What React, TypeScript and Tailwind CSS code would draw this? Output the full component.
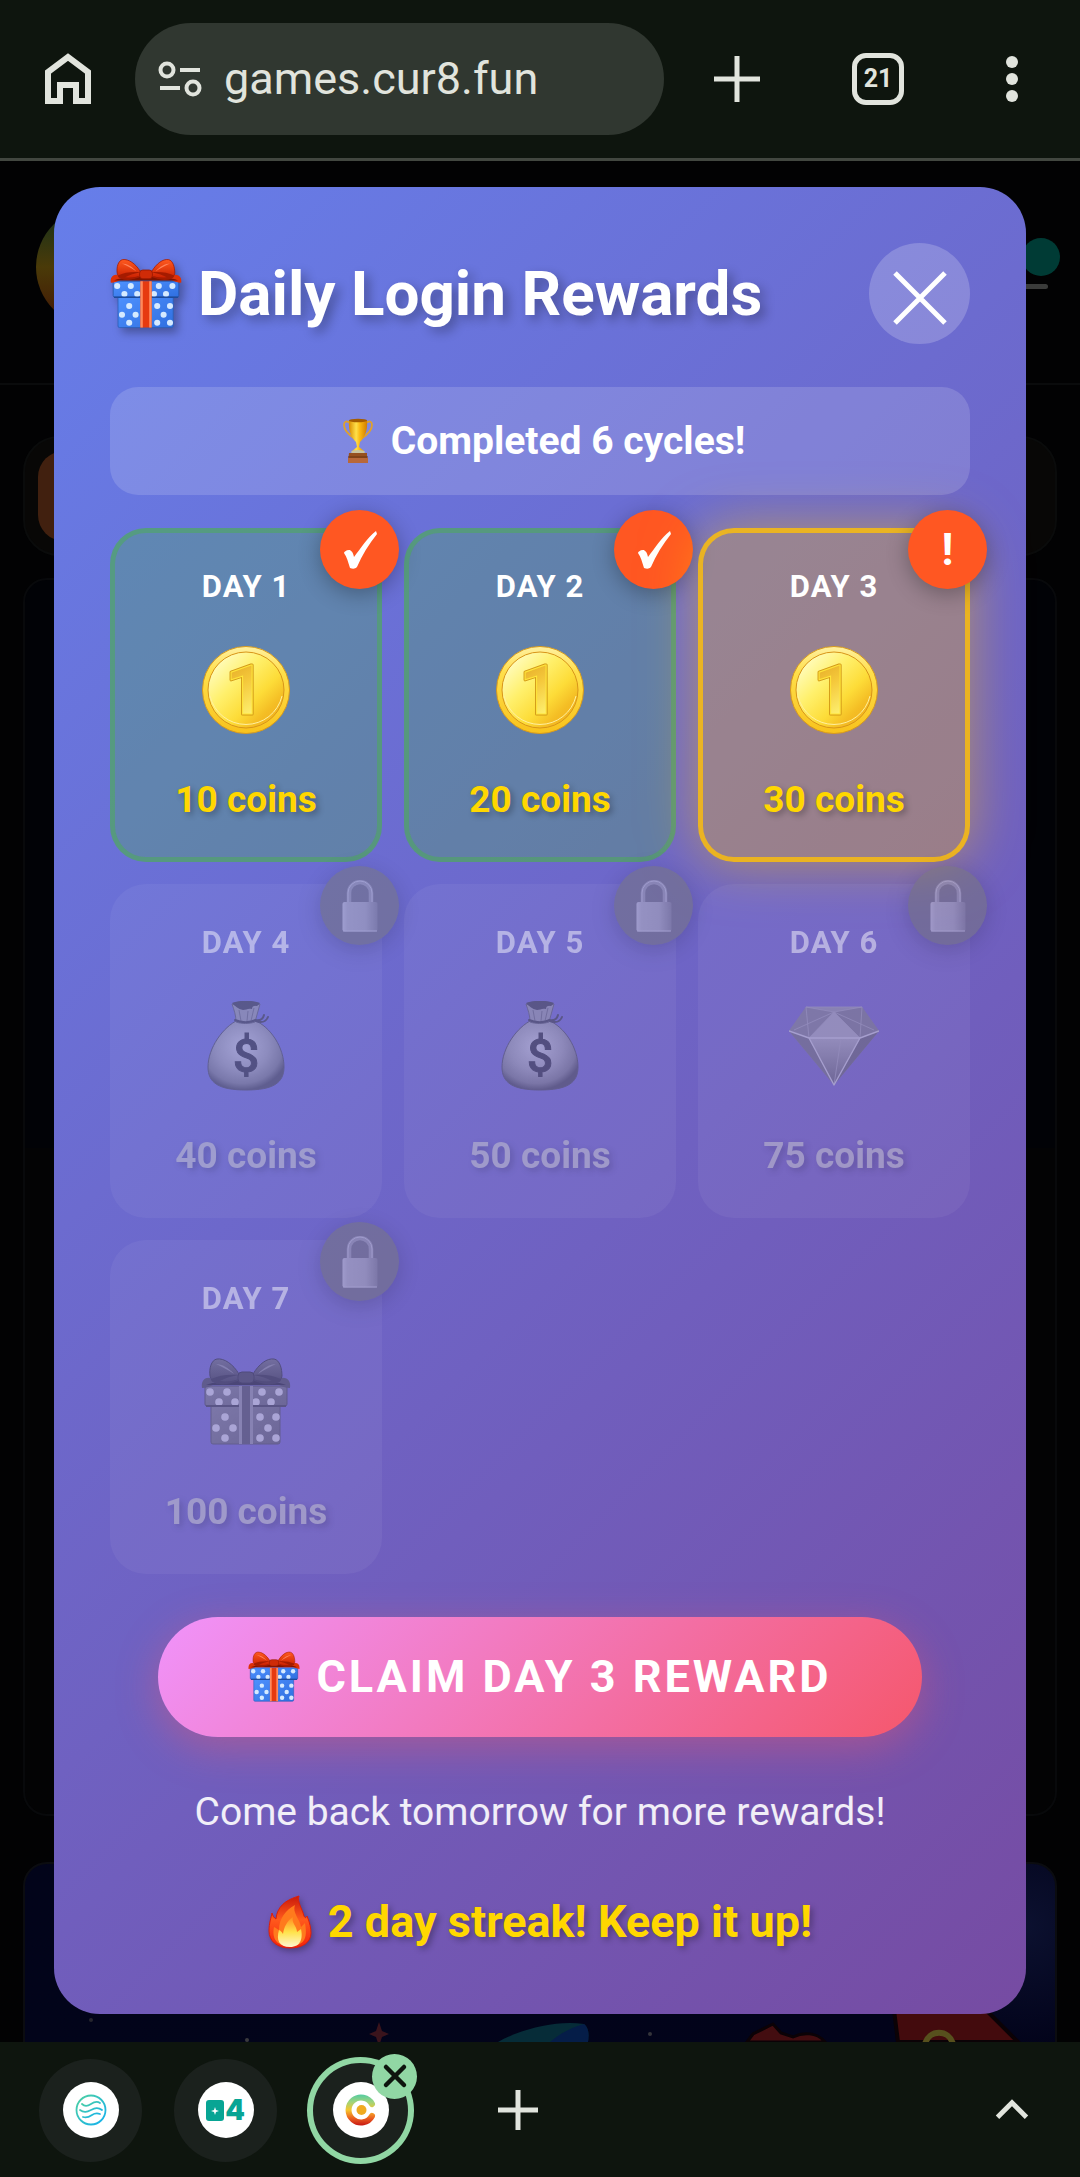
import { useId, type ReactNode } from 'react'
import { ChevronUp, Plus, X } from 'lucide-react'

type DayStatus = 'claimed' | 'today' | 'locked'
type RewardIcon = 'coin' | 'bag' | 'gem' | 'gift'

interface DayReward {
  day: number
  coins: number
  icon: RewardIcon
  status: DayStatus
}

const REWARDS: DayReward[] = [
  { day: 1, coins: 10, icon: 'coin', status: 'claimed' },
  { day: 2, coins: 20, icon: 'coin', status: 'claimed' },
  { day: 3, coins: 30, icon: 'coin', status: 'today' },
  { day: 4, coins: 40, icon: 'bag', status: 'locked' },
  { day: 5, coins: 50, icon: 'bag', status: 'locked' },
  { day: 6, coins: 75, icon: 'gem', status: 'locked' },
  { day: 7, coins: 100, icon: 'gift', status: 'locked' },
]

const CARD_STYLE: Record<DayStatus, string> = {
  claimed: 'border-[rgba(76,175,80,0.5)] bg-[rgba(76,175,80,0.3)]',
  today: 'border-[rgba(255,193,7,0.8)] bg-[rgba(255,193,7,0.3)] shadow-[0_0_55px_rgba(255,193,7,0.5)]',
  locked: 'border-transparent bg-white/10 opacity-50 grayscale',
}

interface IconProps {
  className?: string
}

const LID_DOTS = [[8, 34], [25, 34], [17, 44], [33, 44], [60, 34], [77, 34], [69, 44], [54, 44]]
const BODY_DOTS = [[24, 59], [15, 70], [32, 70], [24, 80], [59, 59], [75, 59], [67, 70], [59, 80], [75, 80]]

function GiftIcon({ className }: IconProps) {
  const id = useId()
  return (
    <svg viewBox="0 0 90 90" className={className} aria-hidden="true">
      <defs>
        <linearGradient id={`${id}b`} x1="0" y1="0" x2="1" y2="1">
          <stop offset="0" stopColor="#4f92ff" />
          <stop offset="1" stopColor="#2f6fe0" />
        </linearGradient>
        <linearGradient id={`${id}r`} x1="0" y1="0" x2="0" y2="1">
          <stop offset="0" stopColor="#ff5a1f" />
          <stop offset="1" stopColor="#c81e00" />
        </linearGradient>
      </defs>
      <rect x="10" y="46" width="69" height="41" rx="2" fill={`url(#${id}b)`} stroke="#2a5db5" strokeWidth="1" />
      {BODY_DOTS.map(([x, y]) => (
        <circle key={`${x}-${y}`} cx={x} cy={y + 1} r="3.8" fill="#d5eaff" />
      ))}
      <rect x="4" y="29" width="82" height="20" rx="2" fill={`url(#${id}b)`} stroke="#2355a8" strokeWidth="1" />
      {LID_DOTS.map(([x, y]) => (
        <circle key={`${x}-${y}`} cx={x + 1} cy={y + 1} r="3.8" fill="#d5eaff" />
      ))}
      <path d="M5 49h80" stroke="#1d4b9c" strokeWidth="2" />
      <path d="M38 29h14v58H38z" fill="#e63a10" />
      <path d="M38 29h3v58h-3zM49 29h3v58h-3z" fill="#ff8a5c" />
      <path d="M9 21C3 20 0 25 1 31c5 0 9-2 13-4zM80 21c7-1 10 4 9 10-5 0-9-2-13-4z" fill="#dd3108" />
      <path d="M5 28h80c-12-6-68-6-80 0z" fill="#7e1400" />
      <path d="M38 17C32 7 23 1 16 2c-6 1-8 10-7 17 1 6 7 8 13 7 6 0 12-1 16-3zM52 17C58 7 66 1 73 2c6 1 8 10 8 17-1 6-7 8-13 7-6 0-12-1-16-3z" fill={`url(#${id}r)`} stroke="#a51b00" strokeWidth="1" />
      <path d="M10 22c8-4 18-5 28-4-7 1-14 3-19 6 7 1 13 0 19-2-7 5-16 7-24 4-3-1-4-2-4-4zM80 22c-8-4-18-5-28-4 7 1 14 3 19 6-7 1-13 0-19-2 7 5 16 7 24 4 3-1 4-2 4-4z" fill="#a51b00" />
      <path d="M15 7c6 0 13 4 18 10-5-4-12-7-18-10zM75 7c-6 0-13 4-18 10 5-4 12-7 18-10z" fill="#ff8258" />
      <rect x="37" y="15" width="16" height="11" rx="4" fill="#cf2b07" stroke="#961800" strokeWidth="1" />
    </svg>
  )
}

function CoinIcon({ className }: IconProps) {
  const id = useId()
  return (
    <svg viewBox="0 0 90 90" className={className} aria-hidden="true">
      <defs>
        <linearGradient id={`${id}o`} x1="0" y1="0" x2="0" y2="1">
          <stop offset="0" stopColor="#fff0a0" />
          <stop offset="0.3" stopColor="#ffdf4a" />
          <stop offset="1" stopColor="#f8c21c" />
        </linearGradient>
        <linearGradient id={`${id}i`} x1="0.1" y1="0.1" x2="0.9" y2="0.9">
          <stop offset="0" stopColor="#fffdc4" />
          <stop offset="0.35" stopColor="#fff06c" />
          <stop offset="0.65" stopColor="#fddc38" />
          <stop offset="0.85" stopColor="#f4bd24" />
          <stop offset="1" stopColor="#f2b31f" />
        </linearGradient>
        <linearGradient id={`${id}n`} x1="0" y1="0" x2="0.3" y2="1">
          <stop offset="0" stopColor="#dd9c1b" />
          <stop offset="0.5" stopColor="#f5c93c" />
          <stop offset="1" stopColor="#fff97c" />
        </linearGradient>
      </defs>
      <circle cx="45" cy="45" r="43.5" fill={`url(#${id}o)`} stroke="#d89a1c" strokeWidth="1" />
      <circle cx="45" cy="45" r="38" fill={`url(#${id}i)`} stroke="#d8951a" strokeWidth="1" />
      <path d="M9 51a37 37 0 0 0 72 0" fill="none" stroke="#fff0a0" strokeWidth="1" />
      <text x="44" y="69" textAnchor="middle" className="[font-family:Roboto,sans-serif] text-[68px] font-bold" fill={`url(#${id}n)`} stroke="#d39a18" strokeWidth="3" strokeLinejoin="round" paintOrder="stroke">
        1
      </text>
      <text x="44" y="69" textAnchor="middle" className="[font-family:Roboto,sans-serif] text-[68px] font-bold" fill="none" stroke="#ffe53b" strokeWidth="1">
        1
      </text>
    </svg>
  )
}

function BagIcon({ className }: IconProps) {
  const id = useId()
  return (
    <svg viewBox="0 0 90 90" className={className} aria-hidden="true">
      <defs>
        <radialGradient id={id} cx="0.45" cy="0.38" r="0.62">
          <stop offset="0" stopColor="#e0dcc8" />
          <stop offset="0.55" stopColor="#b5aea0" />
          <stop offset="0.85" stopColor="#8d867c" />
          <stop offset="1" stopColor="#58524c" />
        </radialGradient>
      </defs>
      <path d="M37 19C22 26 7 47 7 66c0 16 11 23 38 23s38-7 38-23c0-19-13-40-30-47z" fill={`url(#${id})`} stroke="#5b554e" strokeWidth="1" />
      <path d="M31 3c2 6 4 11 4 18 6 2 13 2 19 0l5-18c-8 3-20 3-28 0z" fill="#aaa398" stroke="#6c655c" strokeWidth="1" />
      <path d="M31 2c8-3 20-3 28 0l-3 3c-3-1-5 0-5 3-4-1-6 1-9 1-5-1-8-4-11-7z" fill="#4b4541" />
      <path d="M38 9l2 11M47 10l-1 10M53 7l-3 13" stroke="#7b746b" strokeWidth="1" />
      <path d="M34 19c6 3 15 3 21 0M54 19c5 1 8-1 9-5M55 20c5 2 10 1 12-4" fill="none" stroke="#4b4541" strokeWidth="2" strokeLinecap="round" />
      <text x="45" y="71" textAnchor="middle" fill="#3c3935" stroke="#3c3935" strokeWidth="1" className="[font-family:Roboto,sans-serif] text-[46px] font-medium">
        $
      </text>
    </svg>
  )
}

function GemIcon({ className }: IconProps) {
  const id = useId()
  return (
    <svg viewBox="0 0 90 90" className={className} aria-hidden="true">
      <defs>
        <linearGradient id={id} x1="0" y1="0" x2="0" y2="1">
          <stop offset="0" stopColor="#b8b8b8" />
          <stop offset="1" stopColor="#6c6c6c" />
        </linearGradient>
      </defs>
      <path d="M17 6h56l17 24-45 54L0 30z" fill="#8e8e8e" />
      <path d="M0 30l20 7 25 47z" fill="#7c7c7c" />
      <path d="M90 30l-19 7-26 47z" fill="#707070" />
      <path d="M20 37h51L45 84z" fill={`url(#${id})`} />
      <path d="M17 6L0 30l20 7 25-26z" fill="#8f8f8f" />
      <path d="M73 6l17 24-19 7-26-26z" fill="#888" />
      <path d="M45 11L20 37h51z" fill="#b9b9b9" />
      <path d="M17 6h56L45 11z" fill="#a4a4a4" />
      <path d="M17 6h56M17 6l3 31M73 6l-2 31M45 11L20 37M45 11l26 26M17 6l28 5 28-5M5 29l40-18 40 18M37 22h17M52 37l-7 47" fill="none" stroke="#b8b8b8" strokeWidth="0.8" />
      <path d="M0 30l20 7h51l19-7M20 37l25 47 26-47" fill="none" stroke="#dcdcdc" strokeWidth="1.4" strokeLinejoin="round" />
    </svg>
  )
}

function LockIcon({ className }: IconProps) {
  const id = useId()
  return (
    <svg viewBox="0 0 36 52" className={className} aria-hidden="true">
      <defs>
        <linearGradient id={id} x1="0" y1="0" x2="1" y2="0">
          <stop offset="0" stopColor="#d0d0d0" />
          <stop offset="0.15" stopColor="#bcbcbc" />
          <stop offset="0.65" stopColor="#b4b4b4" />
          <stop offset="1" stopColor="#8b8b8b" />
        </linearGradient>
      </defs>
      <path d="M7 23V13a11 11 0 0 1 22 0v10" fill="none" stroke="#a5a5a5" strokeWidth="4.5" />
      <path d="M6 23V13a12 12 0 0 1 24 0v10" fill="none" stroke="#d0d0d0" strokeWidth="1" />
      <rect x="0.5" y="22" width="35" height="29.5" rx="2" fill={`url(#${id})`} />
      <path d="M1 51h34" stroke="#d2d2d2" strokeWidth="1" />
    </svg>
  )
}

function TrophyIcon({ className }: IconProps) {
  const id = useId()
  return (
    <svg viewBox="0 0 46 46" className={className} aria-hidden="true">
      <defs>
        <linearGradient id={id} x1="0" y1="0" x2="1" y2="0">
          <stop offset="0" stopColor="#d98b00" />
          <stop offset="0.4" stopColor="#ffe04a" />
          <stop offset="0.6" stopColor="#fbb912" />
          <stop offset="1" stopColor="#d07d00" />
        </linearGradient>
      </defs>
      <path d="M15 5c-4-3-6-1-6 2 0 6 5 10 11 14M31 5c4-3 6-1 6 2 0 6-5 10-11 14" fill="none" stroke="#e0a12b" strokeWidth="1.8" />
      <path d="M14 2h18c1 12-3 18-7 22l-1 5 5 4v3H17v-3l5-4-1-5C17 20 13 14 14 2z" fill={`url(#${id})`} />
      <ellipse cx="23" cy="2.5" rx="9" ry="1.8" fill="#a55c00" />
      <ellipse cx="23" cy="34" rx="7" ry="2" fill="#c9c4a0" />
      <path d="M14 35h18v10H13z" fill="#96501f" />
      <path d="M13 40h20v5H13z" fill="#b8683a" />
      <path d="M13 39h20" stroke="#6b3412" strokeWidth="1" />
    </svg>
  )
}

function FireIcon({ className }: IconProps) {
  const id = useId()
  return (
    <svg viewBox="0 0 44 54" className={className} aria-hidden="true">
      <defs>
        <linearGradient id={`${id}a`} x1="0" y1="0" x2="0" y2="1">
          <stop offset="0" stopColor="#c9190a" />
          <stop offset="0.45" stopColor="#ff5a1c" />
          <stop offset="1" stopColor="#f5230d" />
        </linearGradient>
        <linearGradient id={`${id}b`} x1="0" y1="0" x2="0" y2="1">
          <stop offset="0" stopColor="#ff8b1f" />
          <stop offset="0.5" stopColor="#ffe24a" />
          <stop offset="1" stopColor="#fff6d0" />
        </linearGradient>
      </defs>
      <path d="M31 1c-2 6 3 12 5 20 1 2 2 2 3 0 3 7 4 13 4 17 0 9-8 15-21 15S1 46 1 36c0-8 2-13 3-18 1 3 2 5 4 6C9 12 17 5 31 1z" fill={`url(#${id}a)`} stroke="#dc1e0a" strokeWidth="1" />
      <path d="M27 10c-3 8 5 14 6 22l4-4c2 12 2 23-15 23C7 51 4 42 6 32c2 1 3 2 5 3 0-12 7-20 16-25z" fill="#ff7a1d" />
      <path d="M25 22c-2 6 4 9 4 15l4-3c2 9 0 18-11 18S8 45 11 35c2 1 3 2 4 4 1-7 4-13 10-17z" fill={`url(#${id}b)`} />
    </svg>
  )
}

function RewardGlyph({ icon }: { icon: RewardIcon }) {
  const size = 'size-[90px]'
  if (icon === 'coin') return <CoinIcon className={size} />
  if (icon === 'bag') return <BagIcon className={size} />
  if (icon === 'gem') return <GemIcon className={size} />
  return <GiftIcon className={size} />
}

function RewardCard({ reward }: { reward: DayReward }) {
  return (
    <li
      className={[
        'relative flex flex-col items-center rounded-[36px] border-[5px] py-9',
        CARD_STYLE[reward.status],
      ].join(' ')}
    >
      <span className="absolute -top-[23px] -right-[22px] flex size-[79px] items-center justify-center rounded-full bg-[#ff5722] text-[44px] font-bold text-white shadow-[0_5px_22px_rgba(0,0,0,0.3)]">
        {reward.status === 'claimed' && (
          <svg viewBox="0 0 36 40" className="h-10 w-9" aria-label="Claimed">
            <path d="M34 1C25 8 19 18 12 27c-1-5-3-7-5-7-3 0-5 2-5 3 3 4 4 9 6 15 3 1 5 1 7-1C20 25 27 14 35 4z" fill="#fff" />
          </svg>
        )}
        {reward.status === 'today' && '!'}
        {reward.status === 'locked' && <LockIcon className="h-[52px] w-9" />}
      </span>
      <h3 className="text-[31px] leading-9 font-bold tracking-[1px] text-white">DAY {reward.day}</h3>
      <div className="mt-10 mb-11">
        <RewardGlyph icon={reward.icon} />
      </div>
      <p className="text-[37px] leading-[42px] font-bold text-[#ffd700] [text-shadow:3px_3px_6px_rgba(0,0,0,0.3)]">
        {reward.coins} coins
      </p>
    </li>
  )
}

function RewardsDialog() {
  return (
    <section
      role="dialog"
      aria-label="Daily Login Rewards"
      className="relative mx-[54px] mt-[26px] mb-7 rounded-[46px] bg-[linear-gradient(135deg,#667eea_0%,#764ba2_100%)] px-14 pt-14 pb-16"
    >
      <header className="flex items-center justify-between">
        <h2 className="flex items-center gap-4 text-[62px] leading-[72px] font-bold text-white [text-shadow:5px_5px_11px_rgba(0,0,0,0.3)]">
          <GiftIcon className="size-[72px] drop-shadow-[4px_5px_4px_rgba(0,0,0,0.3)]" />
          Daily Login Rewards
        </h2>
        <button type="button" aria-label="Close" className="flex size-[101px] items-center justify-center rounded-full bg-white/20 pt-2">
          <svg viewBox="0 0 54 54" className="size-[54px]" aria-hidden="true">
            <path d="M2 2l50 50M52 2L2 52" stroke="#fff" strokeWidth="5" />
          </svg>
        </button>
      </header>

      <div className="mt-[43px] flex h-[108px] items-center justify-center gap-2.5 rounded-[28px] bg-white/15 text-[39px] font-bold text-white">
        <TrophyIcon className="size-[46px]" />
        Completed 6 cycles!
      </div>

      <ul className="mt-[33px] grid grid-cols-3 gap-[22px]">
        {REWARDS.map(reward => (
          <RewardCard key={reward.day} reward={reward} />
        ))}
      </ul>

      <div className="mt-[43px] flex flex-col items-center text-center">
        <button
          type="button"
          className="flex h-[120px] items-center gap-4 rounded-full bg-[linear-gradient(135deg,#f093fb_0%,#f5576c_100%)] px-[90px] text-[45px] font-bold tracking-[3px] text-white shadow-[0_11px_41px_rgba(245,87,108,0.4)]"
        >
          <GiftIcon className="size-[52px]" />
          CLAIM DAY 3 REWARD
        </button>
        <p className="mt-[51px] text-[39px] leading-[48px] text-white/90">Come back tomorrow for more rewards!</p>
        <p className="mt-[58px] flex items-center gap-4 text-[45px] leading-[56px] font-bold text-[#ffd700] [text-shadow:3px_3px_6px_rgba(0,0,0,0.3)]">
          <FireIcon className="h-[54px] w-11 drop-shadow-[2px_3px_3px_rgba(0,0,0,0.3)]" />
          2 day streak! Keep it up!
        </p>
      </div>
    </section>
  )
}

function DimmedPage() {
  return (
    <div className="absolute inset-0 flex flex-col overflow-hidden bg-[#020203]" aria-hidden="true">
      <div className="flex h-56 shrink-0 items-start justify-between border-b-2 border-[#0a0b0c] pr-[20px] pl-9">
        <div className="mt-[46px] size-[120px] rounded-full bg-[linear-gradient(180deg,#12301c,#4a3a08_50%,#431405)]" />
        <div className="mt-[77px] flex flex-col items-end gap-2">
          <div className="size-[38px] rounded-full bg-[#003b35]" />
          <div className="mr-3 h-[5px] w-14 rounded-full bg-[#3a3b3a]" />
        </div>
      </div>
      <div className="mx-[23px] mt-[51px] h-[120px] shrink-0 rounded-[36px] border-2 border-[#0a0b0b] bg-[#080706] p-[13px]">
        <div className="h-full w-1/3 rounded-[26px] bg-[#41200f]" />
      </div>
      <div className="mx-[23px] mt-[22px] h-[1238px] shrink-0 rounded-[24px] border-2 border-[#08090b] bg-[linear-gradient(180deg,#010206_0%,#010206_46%,#030304_46%)]" />
      <div className="mx-[23px] mt-[46px] flex-1 overflow-hidden rounded-t-[24px] border-2 border-b-0 border-[#0b0c10] bg-[radial-gradient(circle_at_97%_35%,#0c1130_0%,#02031a_12%,#02041a_100%)]">
        <svg viewBox="0 0 1030 178" className="h-[178px] w-full">
          <path d="M354 158l3 9 7 3-7 3-3 9-3-9-7-3 7-3z" fill="#3a141c" />
          <circle cx="66" cy="156" r="2" fill="#26262e" />
          <circle cx="222" cy="176" r="2" fill="#3a3a3e" />
          <circle cx="625" cy="170" r="2" fill="#34343a" />
          <path d="M473 178c25-14 60-22 86-18 5 4 5 11 4 18z" fill="#062c38" />
          <path d="M525 178c12-10 21-14 34-18 5 4 5 11 4 18z" fill="#051d48" />
          <path d="M722 178l6-8 20-10 8 9 12 4c10-5 24-5 32 5z" fill="#430d10" stroke="#0b0206" strokeWidth="3" />
          <path d="M873 178l-4-32h92l32 32z" fill="#430b0d" stroke="#0b0206" strokeWidth="4" />
          <path d="M900 180c4-15 24-15 28 0" fill="none" stroke="#57501d" strokeWidth="6" />
        </svg>
      </div>
    </div>
  )
}

function BrowserBar() {
  return (
    <header className="flex h-[161px] shrink-0 items-center border-b-[3px] border-[#424740] bg-[#0e150e] pr-[54px] pl-11 text-[#e1e4dd]">
      <button type="button" aria-label="Home" className="w-[91px]">
        <svg viewBox="0 0 48 52" className="h-[52px] w-12" aria-hidden="true">
          <path d="M4 19v29h12V32h16v16h12V19L24 4z" fill="none" stroke="currentColor" strokeWidth="6" />
        </svg>
      </button>
      <label className="flex h-28 min-w-0 flex-1 items-center gap-[22px] rounded-full bg-[#303730] pl-[23px]">
        <svg viewBox="0 0 44 38" className="h-[38px] w-11 shrink-0" aria-hidden="true">
          <g fill="none" stroke="currentColor" strokeWidth="4">
            <circle cx="9" cy="10" r="6.5" />
            <circle cx="35" cy="28" r="6.5" />
            <path d="M22 10h20M2 28h20" />
          </g>
        </svg>
        <input
          type="text"
          aria-label="Address"
          defaultValue="games.cur8.fun"
          className="w-full min-w-0 bg-transparent text-[45px] outline-none"
        />
      </label>
      <button type="button" aria-label="New tab" className="ml-[50px]">
        <svg viewBox="0 0 46 46" className="size-[46px]" aria-hidden="true">
          <path d="M23 0v46M0 23h46" stroke="currentColor" strokeWidth="5" />
        </svg>
      </button>
      <button
        type="button"
        aria-label="21 open tabs"
        className="ml-[92px] flex size-[52px] items-center justify-center rounded-[14px] border-[5px] border-current text-[25px] font-bold"
      >
        21
      </button>
      <button type="button" aria-label="More options" className="ml-[94px] flex w-7 flex-col items-center gap-[5px]">
        <span className="size-3 rounded-full bg-current" />
        <span className="size-3 rounded-full bg-current" />
        <span className="size-3 rounded-full bg-current" />
      </button>
    </header>
  )
}

function TabBubble({ label, active = false, children }: { label: string; active?: boolean; children: ReactNode }) {
  return (
    <div className="relative">
      <button
        type="button"
        aria-label={label}
        className={[
          'flex size-[103px] items-center justify-center rounded-full bg-[#1b211d]',
          active ? 'border-4 border-[#91d7a4] ring-2 ring-[#91d7a4]' : '',
        ].join(' ')}
      >
        <span className="flex size-14 items-center justify-center rounded-full bg-white">{children}</span>
      </button>
      {active && (
        <button
          type="button"
          aria-label="Close tab"
          className="absolute -top-[5px] -right-[5px] flex size-[45px] items-center justify-center rounded-full bg-[#91d7a4] text-[#0e150e]"
        >
          <X className="size-9" strokeWidth={3} />
        </button>
      )}
    </div>
  )
}

function TabStrip() {
  return (
    <footer className="flex h-[136px] shrink-0 items-center bg-[#0e150e] px-[39px] text-[#e1e4dd]">
      <div className="flex items-center gap-8">
        <TabBubble label="Waves tab">
          <svg viewBox="0 0 32 32" className="size-8" aria-hidden="true">
            <defs>
              <linearGradient id="wave-tint" x1="0" y1="0" x2="1" y2="1">
                <stop offset="0" stopColor="#4fd1a0" />
                <stop offset="1" stopColor="#12b0f0" />
              </linearGradient>
            </defs>
            <g fill="none" stroke="url(#wave-tint)" strokeWidth="1.8" strokeLinecap="round">
              <circle cx="16" cy="16" r="14.5" />
              <path d="M7 10c3 3 6 2 9 0s6-3 9-1M5 16c4 3 7 2 11 0s7-3 11 0M8 23c3 1 6 0 9-2s5-2 8-1" />
            </g>
          </svg>
        </TabBubble>
        <TabBubble label="Cards tab">
          <span className="flex items-center gap-px text-[#08a594]">
            <svg viewBox="0 0 18 21" className="h-[21px] w-[18px]" aria-hidden="true">
              <rect width="18" height="21" rx="3" fill="currentColor" />
              <path d="M9 7l1 3 3 1-3 1-1 3-1-3-3-1 3-1z" fill="#fff" />
            </svg>
            <span className="[font-family:Inter,sans-serif] text-[28px] leading-7 font-black">4</span>
          </span>
        </TabBubble>
        <TabBubble label="Current tab" active>
          <svg viewBox="0 0 32 32" className="size-8" aria-hidden="true">
            <defs>
              <linearGradient id="logo-tint" x1="0" y1="0" x2="0" y2="32" gradientUnits="userSpaceOnUse">
                <stop offset="0" stopColor="#4fcba5" />
                <stop offset="0.25" stopColor="#9fd47c" />
                <stop offset="0.5" stopColor="#f6c62c" />
                <stop offset="0.75" stopColor="#ec6221" />
                <stop offset="1" stopColor="#c41212" />
              </linearGradient>
            </defs>
            <path d="M27 10A12.500 12.500 0 1 0 27 22" fill="none" stroke="url(#logo-tint)" strokeWidth="6" strokeLinecap="round" />
            <circle cx="16.500" cy="16" r="5" fill="#f0aa20" />
          </svg>
        </TabBubble>
      </div>
      <button type="button" aria-label="Add tab to group" className="ml-[86px]">
        <svg viewBox="0 0 40 40" className="size-10" aria-hidden="true">
          <path d="M20 0v40M0 20h40" stroke="currentColor" strokeWidth="5" />
        </svg>
      </button>
      <button type="button" aria-label="Expand tab strip" className="ml-auto">
        <ChevronUp className="size-[58px]" strokeWidth={2} strokeLinecap="butt" strokeLinejoin="miter" />
      </button>
    </footer>
  )
}

export default function App() {
  return (
    <div className="flex min-h-screen flex-col bg-[#020203] [font-family:Roboto,sans-serif]">
      <BrowserBar />
      <main className="relative flex-1">
        <DimmedPage />
        <RewardsDialog />
      </main>
      <TabStrip />
    </div>
  )
}
